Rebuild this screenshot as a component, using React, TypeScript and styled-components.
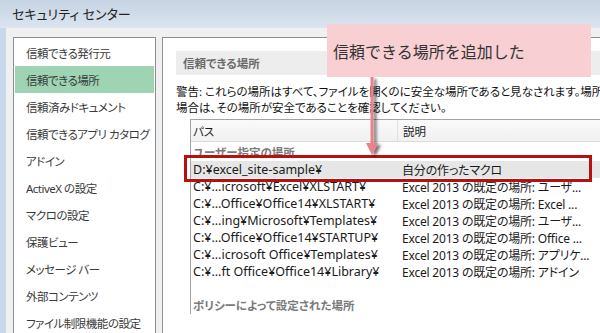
import * as React from "react";
import styled, { createGlobalStyle } from "styled-components";

const GlobalStyle = createGlobalStyle`
  html, body {
    margin: 0;
    padding: 0;
    background: #f0f0f0;
  }
  * {
    box-sizing: border-box;
  }
`;

const FONT = `"Noto Sans", "Noto Sans CJK JP", sans-serif`;

const Window = styled.div`
  position: relative;
  width: 600px;
  height: 333px;
  overflow: hidden;
  display: flex;
  flex-direction: column;
  background: #f0f0f0;
  font-family: ${FONT};
  font-feature-settings: "palt";
  color: #1a1a1a;
`;

const TitleBar = styled.div`
  height: 28px;
  flex: none;
  display: flex;
  align-items: center;
  padding: 0 0 2px 12px;
  background: linear-gradient(#c6d3e2, #dbe5f0);
  font-size: 13px;
  color: #222;
`;

const Body = styled.div`
  flex: 1;
  display: flex;
  min-height: 0;
`;

const FrameEdge = styled.div`
  width: 6px;
  flex: none;
  background: #c7d8ec;
`;

const Sidebar = styled.ul`
  list-style: none;
  margin: 9px 0 0 7px;
  padding: 1px;
  width: 143px;
  flex: none;
  background: #fff;
  border: 1px solid #8e8e8e;
  border-bottom: none;
`;

const NavItem = styled.li<{ $active?: boolean }>`
  height: 27px;
  display: flex;
  align-items: center;
  padding-left: 11px;
  font-size: 11.5px;
  letter-spacing: -0.5px;
  color: #3a3a3a;
  white-space: nowrap;
  background: ${({ $active }) => ($active ? "#9ed4b3" : "transparent")};
`;

const Main = styled.section`
  flex: 1;
  margin: 9px 0 0 6px;
  padding: 13px 0 0 13px;
  background: #fff;
  border-top: 1px solid #8e8e8e;
  border-left: 1px solid #8e8e8e;
  min-width: 0;
  overflow: hidden;
`;

const SectionHeader = styled.div`
  height: 24px;
  display: flex;
  align-items: center;
  padding-left: 7px;
  background: #ededed;
  font-size: 11.5px;
  font-weight: 700;
  color: #6a6a6a;
`;

const Warning = styled.p`
  margin: 9px 0 0;
  font-size: 11.5px;
  line-height: 16px;
  white-space: nowrap;
  color: #111;
`;

const Table = styled.div`
  margin: 3px 0 0 14px;
  border-top: 1px solid #a3a3a3;
  border-left: 1px solid #a3a3a3;
`;

const HeaderRow = styled.div`
  height: 22px;
  display: grid;
  grid-template-columns: 206px 1fr;
  background: linear-gradient(#fafafa, #f1f1f1);
  border-bottom: 1px solid #dcdcdc;
  font-size: 11.5px;
`;

const HeaderCell = styled.div<{ $divider?: boolean }>`
  display: flex;
  align-items: center;
  padding-left: ${({ $divider }) => ($divider ? "5px" : "2px")};
  border-left: ${({ $divider }) => ($divider ? "1px solid #e2e2e2" : "none")};
`;

const GroupLabel = styled.div<{ $gap?: number }>`
  height: 19px;
  display: flex;
  align-items: center;
  padding-left: 2px;
  margin-top: ${({ $gap }) => $gap ?? 0}px;
  font-size: 11.5px;
  font-weight: 700;
  color: #7a7a7a;
`;

const Row = styled.div<{ $selected?: boolean }>`
  height: 17px;
  display: grid;
  grid-template-columns: 209px 1fr;
  align-items: center;
  padding-left: 2px;
  font-size: 12.5px;
  white-space: nowrap;
  background: ${({ $selected }) => ($selected ? "#e6e6e6" : "transparent")};
`;

const Cell = styled.span<{ $tight?: boolean }>`
  overflow: hidden;
  font-size: ${({ $tight }) => ($tight ? "12px" : "inherit")};
  letter-spacing: ${({ $tight }) => ($tight ? "-0.2px" : "normal")};
`;

const Highlight = styled.div`
  position: absolute;
  left: 184px;
  top: 155px;
  width: 408px;
  height: 27px;
  border: 3px solid #b80f0f;
`;

const Callout = styled.div`
  position: absolute;
  left: 327px;
  top: 24px;
  width: 264px;
  height: 53px;
  display: flex;
  align-items: center;
  padding: 0 0 0 6px;
  background: #f8cfd3;
  font-size: 16px;
  font-feature-settings: normal;
  color: #333;
`;

const Arrow = styled.svg`
  position: absolute;
  left: 360px;
  top: 77px;
`;

const navItems = [
  "信頼できる発行元",
  "信頼できる場所",
  "信頼済みドキュメント",
  "信頼できるアプリ カタログ",
  "アドイン",
  "ActiveX の設定",
  "マクロの設定",
  "保護ビュー",
  "メッセージ バー",
  "外部コンテンツ",
  "ファイル制限機能の設定",
];

const locations = [
  ["D:¥excel_site-sample¥", "自分の作ったマクロ"],
  ["C:¥...icrosoft¥Excel¥XLSTART¥", "Excel 2013 の既定の場所: ユーザ..."],
  ["C:¥...Office¥Office14¥XLSTART¥", "Excel 2013 の既定の場所: Excel ..."],
  ["C:¥...ing¥Microsoft¥Templates¥", "Excel 2013 の既定の場所: ユーザ..."],
  ["C:¥...Office¥Office14¥STARTUP¥", "Excel 2013 の既定の場所: Office ..."],
  ["C:¥...icrosoft Office¥Templates¥", "Excel 2013 の既定の場所: アプリケ..."],
  ["C:¥...ft Office¥Office14¥Library¥", "Excel 2013 の既定の場所: アドイン"],
];

export default function App() {
  return (
    <>
      <GlobalStyle />
      <Window>
        <TitleBar>セキュリティ センター</TitleBar>
        <Body>
          <FrameEdge />
          <Sidebar>
            {navItems.map((item, i) => (
              <NavItem key={item} $active={i === 1}>
                {item}
              </NavItem>
            ))}
          </Sidebar>
          <Main>
            <SectionHeader>信頼できる場所</SectionHeader>
            <Warning>
              警告: これらの場所はすべて、ファイルを開くのに安全な場所であると見なされます。場所を
              <br />
              場合は、その場所が安全であることを確認してください。
            </Warning>
            <Table>
              <HeaderRow>
                <HeaderCell>パス</HeaderCell>
                <HeaderCell $divider>説明</HeaderCell>
              </HeaderRow>
              <GroupLabel>ユーザー指定の場所</GroupLabel>
              {locations.map(([path, desc], i) => (
                <Row key={path} $selected={i === 0}>
                  <Cell>{path}</Cell>
                  <Cell $tight>{desc}</Cell>
                </Row>
              ))}
              <GroupLabel $gap={15}>ポリシーによって設定された場所</GroupLabel>
            </Table>
          </Main>
        </Body>

        <Highlight />
        <Callout>信頼できる場所を追加した</Callout>
        <Arrow width="28" height="82" viewBox="0 0 28 82">
          <defs>
            <filter id="sh" x="-50%" y="-10%" width="200%" height="130%">
              <feGaussianBlur in="SourceAlpha" stdDeviation="1.6" />
              <feOffset dx="3" dy="2" />
              <feComponentTransfer>
                <feFuncA type="linear" slope="0.55" />
              </feComponentTransfer>
              <feMerge>
                <feMergeNode />
                <feMergeNode in="SourceGraphic" />
              </feMerge>
            </filter>
          </defs>
          <g filter="url(#sh)">
            <path d="M12 0 L12 68" stroke="#e8838c" strokeWidth="3" fill="none" />
            <path d="M6 66 L18 66 L12 78 Z" fill="#e8838c" />
          </g>
        </Arrow>
      </Window>
    </>
  );
}
